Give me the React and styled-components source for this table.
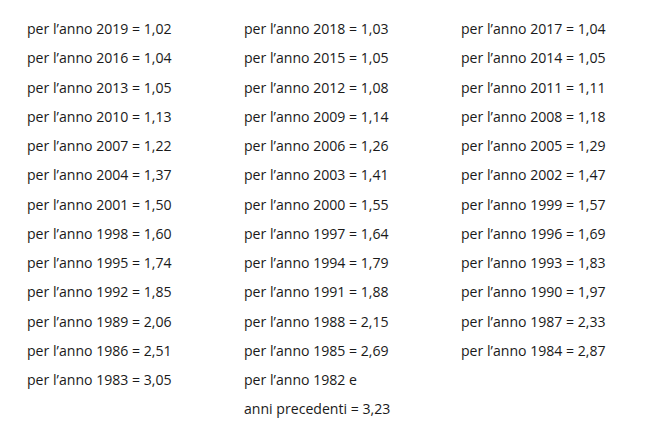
import styled, { createGlobalStyle } from "styled-components";

const GlobalStyle = createGlobalStyle`
    body {
        margin: 0;
        background: #ffffff;
    }
`

const Page = styled.div`
    width: 660px;
    height: 436px;
    padding: 14px 0 0 27px;
    box-sizing: border-box;
    font-family: "Open Sans", "Noto Sans", sans-serif;
    font-size: 14.1px;
    color: #1a1a1a;
    background: #ffffff;
`

const Table = styled.div`
    display: grid;
    grid-template-columns: repeat(3, 217px);
`

const Entry = styled.p`
    margin: 0;
    line-height: 29.25px;
    white-space: nowrap;
`

const rows = [
    ["2019", "1,02"], ["2018", "1,03"], ["2017", "1,04"],
    ["2016", "1,04"], ["2015", "1,05"], ["2014", "1,05"],
    ["2013", "1,05"], ["2012", "1,08"], ["2011", "1,11"],
    ["2010", "1,13"], ["2009", "1,14"], ["2008", "1,18"],
    ["2007", "1,22"], ["2006", "1,26"], ["2005", "1,29"],
    ["2004", "1,37"], ["2003", "1,41"], ["2002", "1,47"],
    ["2001", "1,50"], ["2000", "1,55"], ["1999", "1,57"],
    ["1998", "1,60"], ["1997", "1,64"], ["1996", "1,69"],
    ["1995", "1,74"], ["1994", "1,79"], ["1993", "1,83"],
    ["1992", "1,85"], ["1991", "1,88"], ["1990", "1,97"],
    ["1989", "2,06"], ["1988", "2,15"], ["1987", "2,33"],
    ["1986", "2,51"], ["1985", "2,69"], ["1984", "2,87"],
    ["1983", "3,05"],
]

function App() {
    return (
        <>
            <GlobalStyle />
            <Page>
                <Table>
                    {rows.map(([year, value]) => (
                        <Entry key={year}>per l’anno {year} = {value}</Entry>
                    ))}
                    <Entry>
                        per l’anno 1982 e
                        <br />
                        anni precedenti = 3,23
                    </Entry>
                </Table>
            </Page>
        </>
    )
}

export default App;
